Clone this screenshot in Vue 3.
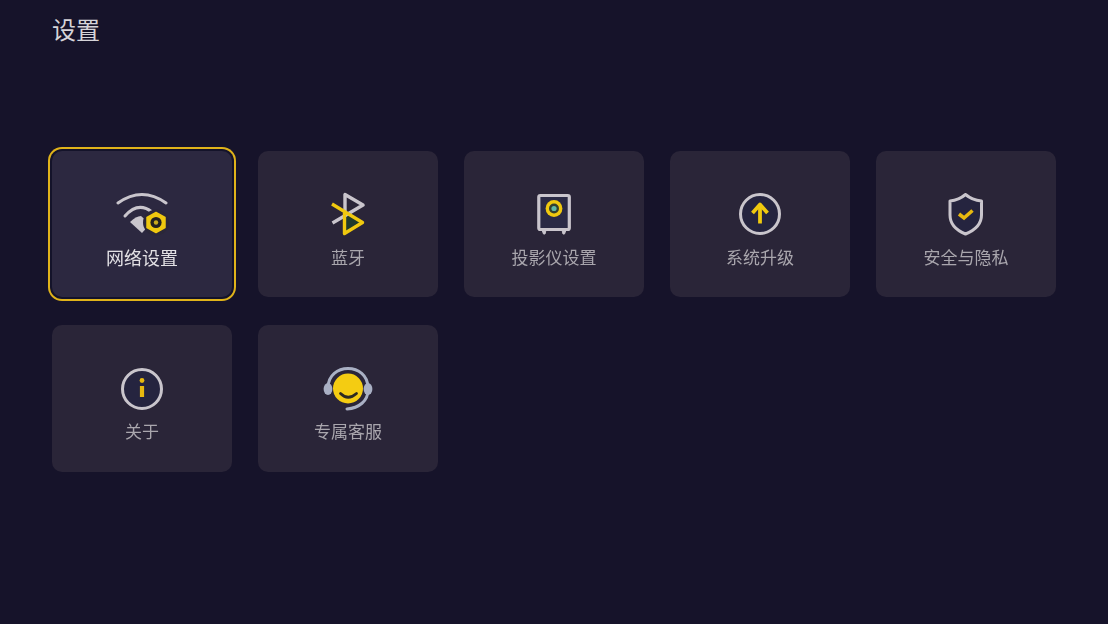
<template>
  <div class="page">
    <h1 class="title">设置</h1>

    <div class="grid">
      <div
        v-for="item in items"
        :key="item.id"
        class="card"
        :class="{ active: item.id === activeId }"
      >
        <svg class="icon" viewBox="0 0 60 60" fill="none">
          <!-- wifi -->
          <g v-if="item.id === 'wifi'">
            <path d="M6 19 Q30 2 54 19" stroke="#c9c5cc" stroke-width="3" stroke-linecap="round" />
            <path d="M13 32 Q26 17 40 28" stroke="#c9c5cc" stroke-width="3" stroke-linecap="round" />
            <path d="M18 38 Q24 32 29 32 L38 40 L30 49 Z" fill="#c9c5cc" />
            <circle cx="44" cy="38.5" r="13" fill="#2b2739" />
            <path d="M44 28.5 L53 33.5 V43.5 L44 48.5 L35 43.5 V33.5 Z" fill="#f0c90f" stroke="#f0c90f" stroke-width="1.5" stroke-linejoin="round" />
            <circle cx="44" cy="38.5" r="5.6" fill="#23211f" />
            <circle cx="44" cy="38.5" r="2.2" fill="#c9ab1c" />
          </g>

          <!-- bluetooth -->
          <g v-else-if="item.id === 'bluetooth'">
            <path d="M26 30 L26 49 L44 38.5 Z" fill="#1f3a2c" />
            <path d="M14.5 39 L45 21 L27 10.5 V30" stroke="#c9c5cc" stroke-width="3.4" stroke-linejoin="round" />
            <path d="M14 20 L44.5 38.5 L26.5 49.5 V29" stroke="#f0c90f" stroke-width="3.4" stroke-linejoin="round" />
          </g>

          <!-- projector -->
          <g v-else-if="item.id === 'projector'">
            <rect x="14.8" y="11.5" width="30.5" height="34" rx="1.5" fill="#2a2a45" stroke="#c9c5cc" stroke-width="3.2" />
            <path d="M18 46 H22 L21 50 H19.5 Z M38 46 H42 L40.5 50 H39 Z" fill="#c9c5cc" stroke="#c9c5cc" />
            <circle cx="30" cy="24.5" r="8.4" fill="#f0c90f" />
            <circle cx="30" cy="24.5" r="5" fill="#33402f" />
            <circle cx="30" cy="24.5" r="2.6" fill="#5fb9a6" />
          </g>

          <!-- upgrade -->
          <g v-else-if="item.id === 'upgrade'">
            <circle cx="30" cy="30" r="19.5" fill="#25243f" stroke="#c9c5cc" stroke-width="3" />
            <path d="M30 39.5 V22" stroke="#f0c90f" stroke-width="3.8" />
            <path d="M22.5 29 L30 20.5 L37.5 29" stroke="#f0c90f" stroke-width="3.8" stroke-linejoin="round" />
          </g>

          <!-- shield -->
          <g v-else-if="item.id === 'security'">
            <path
              d="M29.5 10.5 Q36 16 45.5 17 V31 C45.5 41 37 47 29.5 50 C22 47 14 41 14 31 V17 Q23 16 29.5 10.5 Z"
              fill="#25243f"
              stroke="#c9c5cc"
              stroke-width="3"
              stroke-linejoin="round"
            />
            <path d="M23 30 L28 34 L36.5 26.5" stroke="#e8b90f" stroke-width="3.6" />
          </g>

          <!-- about -->
          <g v-else-if="item.id === 'about'">
            <circle cx="30" cy="31" r="19.5" fill="#25243f" stroke="#c9c5cc" stroke-width="3" />
            <circle cx="30" cy="22.5" r="2.4" fill="#e8b90f" />
            <path d="M30 28 V39" stroke="#e8b90f" stroke-width="4.2" />
          </g>

          <!-- service -->
          <g v-else>
            <path d="M10 30 C10 4 50 4 50 30" stroke="#a9b0c4" stroke-width="3" />
            <path d="M50 32 C50 43 41 50 29 51" stroke="#a9b0c4" stroke-width="3" stroke-linecap="round" />
            <ellipse cx="10" cy="31" rx="4.4" ry="6" fill="#a9b0c4" />
            <ellipse cx="50" cy="31" rx="4.4" ry="6" fill="#a9b0c4" />
            <circle cx="30" cy="30.5" r="15" fill="#f4cc12" />
            <path d="M22.5 35.5 Q30 43 38.5 35.5" stroke="#2c2a22" stroke-width="2.8" stroke-linecap="round" />
          </g>
        </svg>
        <span class="label">{{ item.label }}</span>
      </div>
    </div>
  </div>
</template>

<script setup>
const activeId = "wifi";

const items = [
  { id: "wifi", label: "网络设置" },
  { id: "bluetooth", label: "蓝牙" },
  { id: "projector", label: "投影仪设置" },
  { id: "upgrade", label: "系统升级" },
  { id: "security", label: "安全与隐私" },
  { id: "about", label: "关于" },
  { id: "service", label: "专属客服" }
];
</script>

<style>
html,
body {
  margin: 0;
  background: #16132a;
}
</style>

<style scoped>
.page {
  width: 1108px;
  height: 624px;
  box-sizing: border-box;
  padding: 12px 0 0 52px;
  background: #16132a;
  font-family: "Noto Sans CJK SC", "Noto Sans", sans-serif;
  overflow: hidden;
}

.title {
  margin: 0 0 105px;
  height: 34px;
  font-size: 24px;
  line-height: 34px;
  font-weight: 400;
  color: #d6d4d9;
}

.grid {
  display: grid;
  grid-template-columns: repeat(5, 180px);
  grid-template-rows: 146px 147px;
  gap: 28px 26px;
}

.card {
  display: flex;
  flex-direction: column;
  align-items: center;
  box-sizing: border-box;
  padding-top: 33px;
  background: #2a2538;
  border-radius: 10px;
}

.icon {
  width: 60px;
  height: 60px;
  overflow: visible;
  filter: blur(0.4px);
}

.label {
  margin-top: 1px;
  font-size: 17px;
  line-height: 24px;
  color: #a9a6ad;
  filter: blur(0.3px);
}

/* selected card */
.card.active {
  background: #2c2840;
  box-shadow: 0 0 0 2px #14132a, 0 0 0 4px #e0b31a;
}

.card.active .label {
  font-size: 18px;
  color: #e2e0e4;
}
</style>
